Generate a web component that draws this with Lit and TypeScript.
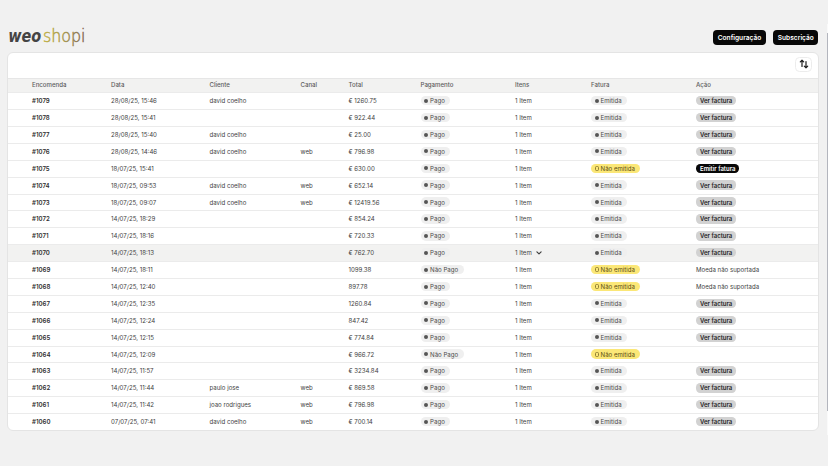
import { LitElement, html, svg, css, nothing } from 'lit';
import { customElement, property } from 'lit/decorators.js';
import { classMap } from 'lit/directives/class-map.js';

interface Order {
  id: string;
  date: string;
  client?: string;
  channel?: string;
  total: string;
  paid: boolean;
  issued: boolean;
  action?: 'view' | 'issue' | 'unsupported';
  active?: boolean;
}

const order = (
  id: string,
  date: string,
  client: string,
  channel: string,
  total: string,
  extra: Partial<Order> = {}
): Order => ({
  id,
  date,
  client,
  channel,
  total,
  paid: true,
  issued: true,
  action: 'view',
  ...extra,
});

const ORDERS: Order[] = [
  order('#1079', '28/08/25, 15:46', 'david coelho', '', '€ 1260.75'),
  order('#1078', '28/08/25, 15:41', '', '', '€ 922.44'),
  order('#1077', '28/08/25, 15:40', 'david coelho', '', '€ 25.00'),
  order('#1076', '28/08/25, 14:46', 'david coelho', 'web', '€ 796.98'),
  order('#1075', '18/07/25, 15:41', '', '', '€ 630.00', {
    issued: false,
    action: 'issue',
  }),
  order('#1074', '18/07/25, 09:53', 'david coelho', 'web', '€ 652.14'),
  order('#1073', '18/07/25, 09:07', 'david coelho', 'web', '€ 12419.56'),
  order('#1072', '14/07/25, 18:29', '', '', '€ 854.24'),
  order('#1071', '14/07/25, 18:16', '', '', '€ 720.33'),
  order('#1070', '14/07/25, 18:13', '', '', '€ 762.70', { active: true }),
  order('#1069', '14/07/25, 18:11', '', '', '1099.38', {
    paid: false,
    issued: false,
    action: 'unsupported',
  }),
  order('#1068', '14/07/25, 12:40', '', '', '897.78', {
    issued: false,
    action: 'unsupported',
  }),
  order('#1067', '14/07/25, 12:35', '', '', '1260.84'),
  order('#1066', '14/07/25, 12:24', '', '', '847.42'),
  order('#1065', '14/07/25, 12:15', '', '', '€ 774.84'),
  order('#1064', '14/07/25, 12:09', '', '', '€ 966.72', {
    paid: false,
    issued: false,
    action: undefined,
  }),
  order('#1063', '14/07/25, 11:57', '', '', '€ 3234.84'),
  order('#1062', '14/07/25, 11:44', 'paulo jose', 'web', '€ 869.58'),
  order('#1061', '14/07/25, 11:42', 'joao rodrigues', 'web', '€ 796.98'),
  order('#1060', '07/07/25, 07:41', 'david coelho', 'web', '€ 700.14'),
];

const COLUMNS = [
  'Encomenda',
  'Data',
  'Cliente',
  'Canal',
  'Total',
  'Pagamento',
  'Itens',
  'Fatura',
  'Ação',
];

@customElement('status-badge')
export class StatusBadge extends LitElement {
  static styles = css`
    :host {
      display: flex;
    }
    .badge {
      display: flex;
      align-items: center;
      gap: 2px;
      height: 9.4px;
      padding: 0 5.4px 0 3.6px;
      border-radius: 5px;
      background: #efefef;
      color: #4a4a4a;
      white-space: nowrap;
    }
    .warning {
      background: #fbe777;
      color: #5b4c12;
      padding-right: 5px;
    }
    .dot {
      width: 4px;
      height: 4px;
      box-sizing: border-box;
      border-radius: 50%;
      background: #555;
    }
    .warning .dot {
      height: 5px;
      border: 0.7px solid #8f7f34;
      border-radius: 1.5px;
      background: transparent;
    }
  `;

  @property({ type: Boolean }) warning = false;

  render() {
    return html`
      <span class=${classMap({ badge: true, warning: this.warning })}>
        <span class="dot"></span><slot></slot>
      </span>
    `;
  }
}

@customElement('orders-table')
export class OrdersTable extends LitElement {
  static styles = css`
    :host {
      display: block;
    }
    .row {
      display: grid;
      grid-template-columns: 79px 98.5px 91px 48px 72px 94.5px 76px 105px 1fr;
      align-items: center;
      box-sizing: border-box;
      height: 16.9px;
      padding: 0 0 0.8px 24px;
      border-top: 1px solid #ebebeb;
      font-size: 6.1px;
      line-height: 9px;
      color: #3e3e3e;
      white-space: nowrap;
    }
    .head {
      height: 14.6px;
      border-top-color: #e6e6e6;
      background: #f2f2f1;
      font-weight: 500;
      color: #5c5c5c;
    }
    .active {
      background: #f2f2f1;
    }
    .id {
      font-weight: 600;
      color: #303030;
    }
    .items {
      display: flex;
      align-items: center;
      gap: 4.5px;
    }
    .chevron {
      width: 6px;
      height: 4px;
      fill: none;
      stroke: #444;
      stroke-width: 1.2;
      stroke-linecap: round;
      stroke-linejoin: round;
    }
    .action {
      display: flex;
    }
    button {
      height: 9.4px;
      padding: 0 4px;
      border: 0;
      border-radius: 4.2px;
      background: #d2d2d2;
      color: #252525;
      font: 600 6px/9px Inter, sans-serif;
    }
    .dark {
      background: #080808;
      color: #fff;
    }
  `;

  @property({ attribute: false }) orders: Order[] = [];

  _renderAction(action?: string) {
    if (action === 'view') return html`<button>Ver factura</button>`;
    if (action === 'issue')
      return html`<button class="dark">Emitir fatura</button>`;
    if (action === 'unsupported') return html`Moeda não suportada`;
    return nothing;
  }

  _renderOrder(o: Order) {
    return html`
      <div class=${classMap({ row: true, active: !!o.active })}>
        <span class="id">${o.id}</span>
        <span>${o.date}</span>
        <span>${o.client}</span>
        <span>${o.channel}</span>
        <span>${o.total}</span>
        <status-badge>${o.paid ? 'Pago' : 'Não Pago'}</status-badge>
        <span class="items">
          1 Item
          ${o.active
            ? html`<svg class="chevron" viewBox="0 0 6 4">
                <path d="M.9.8 3 2.9 5.1.8" />
              </svg>`
            : nothing}
        </span>
        <status-badge ?warning=${!o.issued}
          >${o.issued ? 'Emitida' : 'Não emitida'}</status-badge
        >
        <span class="action">${this._renderAction(o.action)}</span>
      </div>
    `;
  }

  render() {
    return html`
      <div class="row head">${COLUMNS.map(c => html`<span>${c}</span>`)}</div>
      ${this.orders.map(o => this._renderOrder(o))}
    `;
  }
}

@customElement('app-root')
export class AppRoot extends LitElement {
  static styles = css`
    :host {
      display: flex;
      justify-content: space-between;
      width: 828px;
      height: 466px;
      overflow: hidden;
      background: #f1f1f1;
      font-family: Inter, 'Liberation Sans', sans-serif;
    }
    .page {
      width: 812px;
      padding: 26px 0 0 7px;
    }
    header {
      display: flex;
      align-items: flex-start;
      justify-content: space-between;
      height: 26px;
    }
    .logo {
      width: 80px;
      height: 24px;
      overflow: visible;
      font-family: 'DejaVu Sans', sans-serif;
      font-size: 18px;
    }
    .weo {
      font-weight: 700;
      font-style: italic;
      fill: #444;
    }
    .shopi {
      font-weight: 200;
      fill: url(#gold);
      stroke: url(#gold);
      stroke-width: 0.5;
    }
    .buttons {
      display: flex;
      gap: 7px;
      padding: 4px 1px 0 0;
    }
    .buttons button {
      height: 15px;
      padding: 1px 4.8px 0;
      border: 0;
      border-radius: 4px;
      background: #080808;
      color: #fff;
      font: 600 6.6px/14px Inter, sans-serif;
    }
    .buttons button:last-child {
      width: 45px;
    }
    .card {
      box-sizing: border-box;
      width: 812px;
      border: 1px solid #e4e4e4;
      border-radius: 6px;
      background: #fff;
      overflow: hidden;
    }
    .toolbar {
      display: flex;
      justify-content: flex-end;
      align-items: flex-start;
      box-sizing: border-box;
      height: 24.6px;
      padding: 3.5px 6px 0 0;
    }
    .sort {
      display: flex;
      align-items: center;
      justify-content: center;
      box-sizing: border-box;
      width: 17px;
      height: 15px;
      padding: 0;
      border: 1px solid #ececec;
      border-radius: 4.5px;
      background: #fff;
    }
    .sort svg {
      flex: none;
      width: 10px;
      height: 10px;
      fill: none;
      stroke: #1c1c1c;
      stroke-width: 1.2;
      stroke-linecap: round;
      stroke-linejoin: round;
    }
    .scrollbar {
      box-sizing: border-box;
      width: 1px;
      height: 411px;
      margin-top: 24px;
      padding-top: 9px;
      background: #fafafa;
    }
    .thumb {
      height: 378px;
      background: #b3b5bd;
    }
  `;

  _renderLogo() {
    return html`
      <svg class="logo" viewBox="0 0 80 24">
        ${svg`
          <defs>
            <linearGradient id="gold" x1="0" x2="1">
              <stop offset="0" stop-color="#c0b044" />
              <stop offset="0.45" stop-color="#a99a4c" />
              <stop offset="1" stop-color="#806754" />
            </linearGradient>
          </defs>
          <text class="weo" x="1.2" y="16.3" textLength="33" lengthAdjust="spacingAndGlyphs">weo</text>
          <text class="shopi" x="36" y="16.3" textLength="42.5" lengthAdjust="spacingAndGlyphs">shopi</text>
        `}
      </svg>
    `;
  }

  render() {
    return html`
      <div class="page">
        <header>
          ${this._renderLogo()}
          <div class="buttons">
            <button>Configuração</button>
            <button>Subscrição</button>
          </div>
        </header>
        <div class="card">
          <div class="toolbar">
            <button class="sort">
              <svg viewBox="0 0 10 10">
                <path d="M3 7.4V1.2M1.3 2.9 3 1.2l1.7 1.7M7 2.6v6.2M5.3 7.1 7 8.8l1.7-1.7" />
              </svg>
            </button>
          </div>
          <orders-table .orders=${ORDERS}></orders-table>
        </div>
      </div>
      <div class="scrollbar"><div class="thumb"></div></div>
    `;
  }
}
